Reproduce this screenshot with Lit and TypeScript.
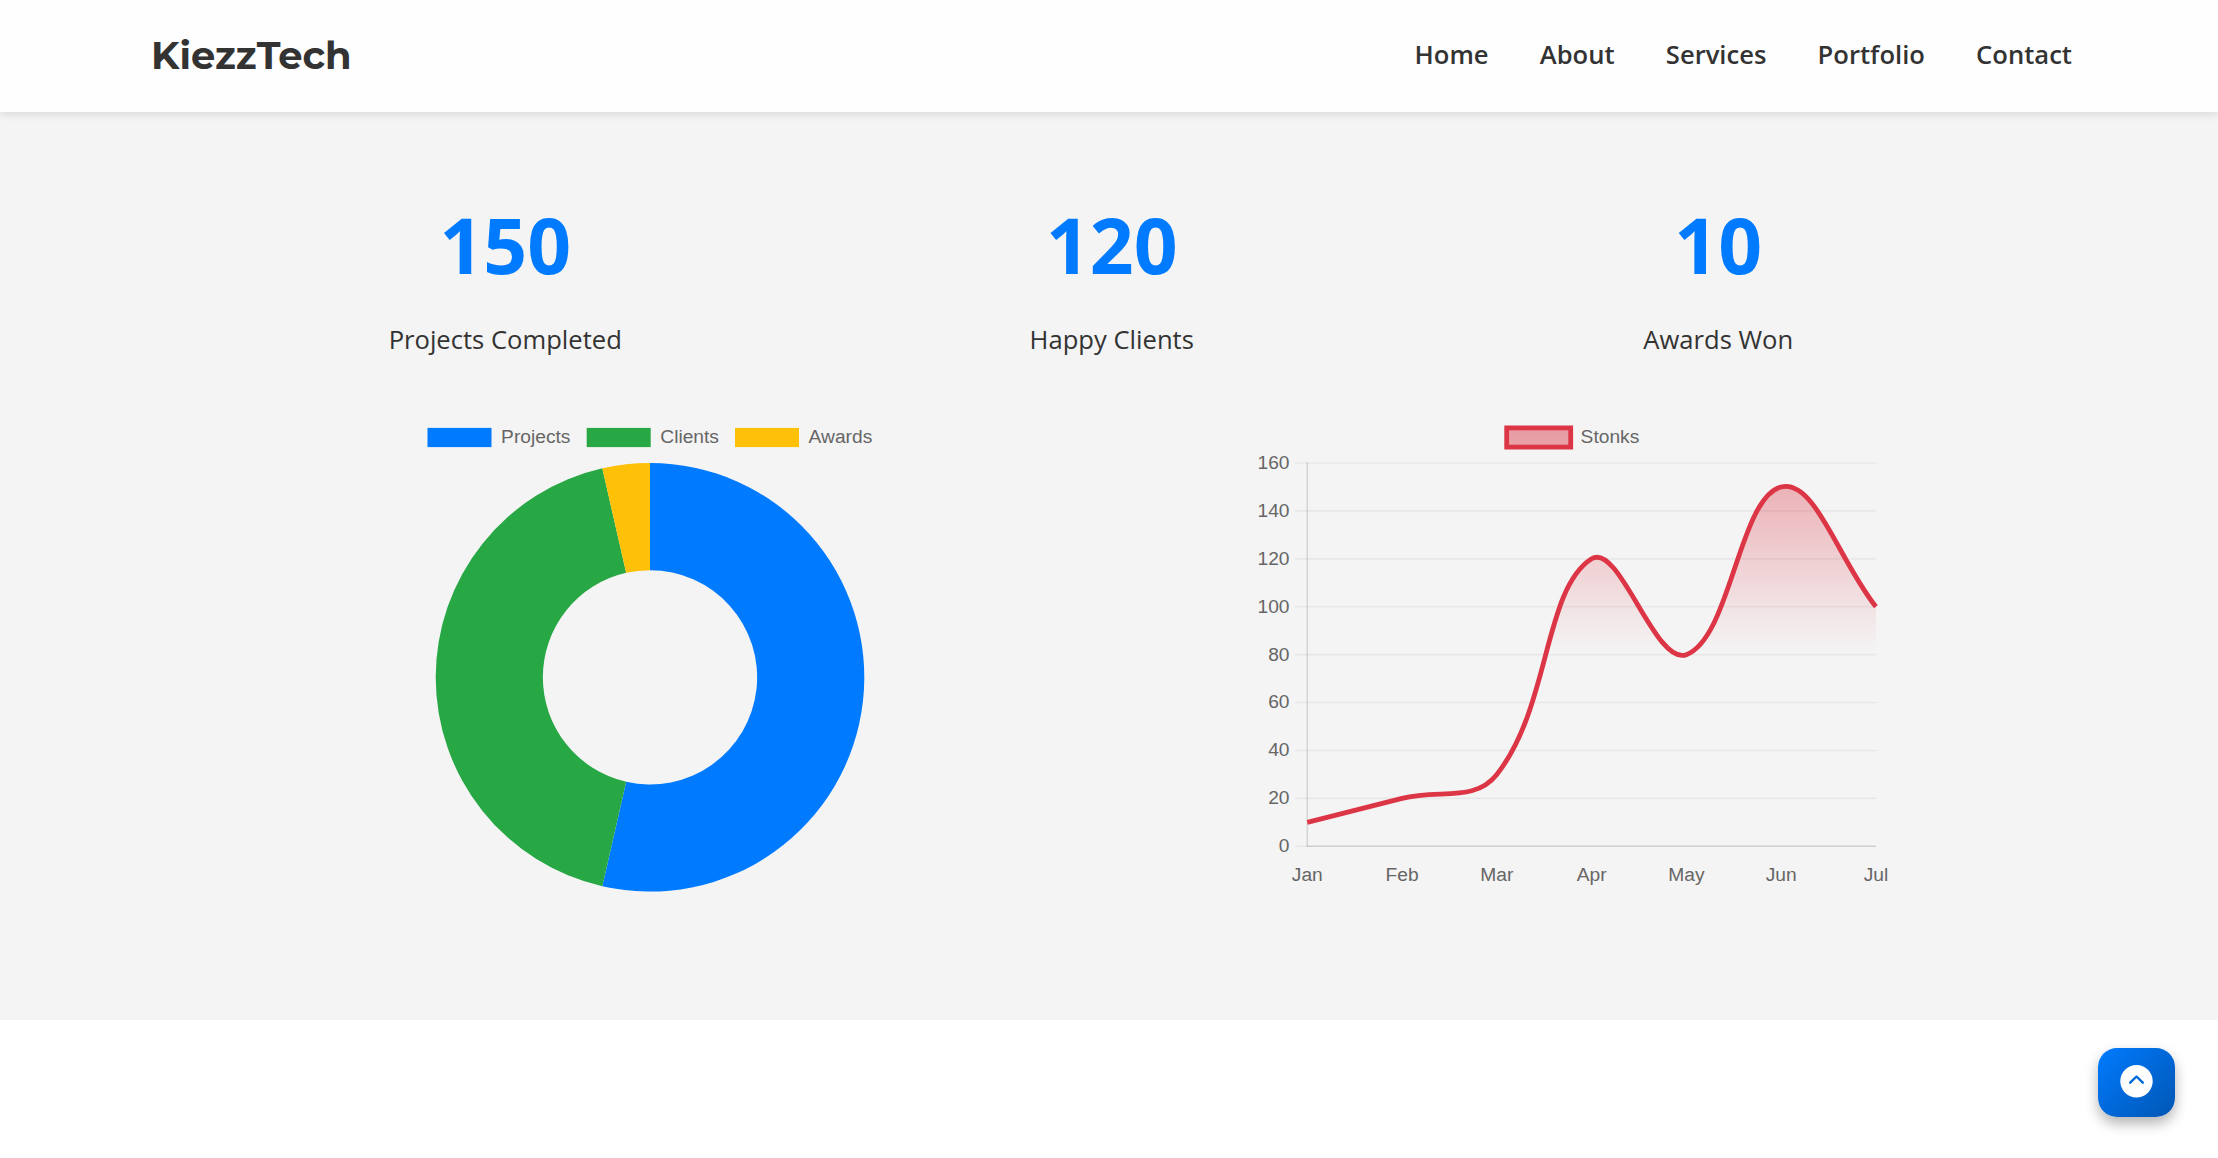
import { LitElement, html, svg, css } from "lit";
import { customElement, property } from "lit/decorators.js";

interface Slice { label: string; value: number; color: string; x: number; }

const SLICES: Slice[] = [
  { label: "Projects", value: 150, color: "#007bff", x: 97.5 },
  { label: "Clients", value: 120, color: "#28a745", x: 256.7 },
  { label: "Awards", value: 10, color: "#ffc107", x: 405 },
];

const chartStyles = css`
  :host { display: block; width: 640px; height: 482px; }
  svg { display: block; overflow: visible; }
  text { font-family: "Liberation Sans", Arial, sans-serif; font-size: 19.2px; fill: #666; }
`;

@customElement("donut-chart")
class DonutChart extends LitElement {
  static styles = chartStyles;

  private slicePath(from: number, to: number) {
    const cx = 320, cy = 267.3, R = 214.3, r = 107.15;
    const p = (a: number, rad: number) =>
      `${cx + rad * Math.sin(a)} ${cy - rad * Math.cos(a)}`;
    const large = to - from > Math.PI ? 1 : 0;
    return `M${p(from, R)}A${R} ${R} 0 ${large} 1 ${p(to, R)}L${p(to, r)}A${r} ${r} 0 ${large} 0 ${p(from, r)}Z`;
  }

  render() {
    const total = SLICES.reduce((s, d) => s + d.value, 0);
    let angle = 0;
    return html`<svg width="640" height="482" viewBox="0 0 640 482">
      ${SLICES.map((d) => {
        const start = angle;
        angle += (d.value / total) * Math.PI * 2;
        return svg`
          <rect x=${d.x} y="17.9" width="64" height="19.2" fill=${d.color}></rect>
          <text x=${d.x + 73.6} y="33">${d.label}</text>
          <path d=${this.slicePath(start, angle)} fill=${d.color}></path>`;
      })}
    </svg>`;
  }
}

@customElement("line-chart")
class LineChart extends LitElement {
  static styles = chartStyles;

  private readonly months = ["Jan", "Feb", "Mar", "Apr", "May", "Jun", "Jul"];
  private readonly values = [10, 20, 30, 120, 80, 150, 100];

  private x(i: number) { return 57.3 + (i * 568.6) / 6; }
  private y(v: number) { return 436.3 - (v / 160) * 383.3; }

  /* Cardinal spline with tension 0.4, weighted by neighbour distance. */
  private curve() {
    const t = 0.4;
    const pts = this.values.map((v, i) => ({ x: this.x(i), y: this.y(v) }));
    const ctl = pts.map((c, i) => {
      const a = pts[Math.max(0, i - 1)];
      const b = pts[Math.min(pts.length - 1, i + 1)];
      const d1 = Math.hypot(c.x - a.x, c.y - a.y);
      const d2 = Math.hypot(b.x - c.x, b.y - c.y);
      const f1 = (t * d1) / (d1 + d2), f2 = (t * d2) / (d1 + d2);
      return {
        px: c.x - f1 * (b.x - a.x), py: c.y - f1 * (b.y - a.y),
        nx: c.x + f2 * (b.x - a.x), ny: c.y + f2 * (b.y - a.y),
      };
    });
    let d = `M${pts[0].x} ${pts[0].y}`;
    for (let i = 1; i < pts.length; i++) {
      d += `C${ctl[i - 1].nx} ${ctl[i - 1].ny} ${ctl[i].px} ${ctl[i].py} ${pts[i].x} ${pts[i].y}`;
    }
    return d;
  }

  render() {
    const ticks = [0, 20, 40, 60, 80, 100, 120, 140, 160];
    const line = this.curve();
    return html`<svg width="640" height="482" viewBox="0 0 640 482">
      <defs>
        <linearGradient id="fade" gradientUnits="userSpaceOnUse" x1="0" y1="2" x2="0" y2="242">
          <stop offset="0" stop-color="#dc3545" stop-opacity="0.5"></stop>
          <stop offset="1" stop-color="#dc3545" stop-opacity="0"></stop>
        </linearGradient>
      </defs>
      <rect x="256.7" y="17.9" width="64" height="19.2" fill="url(#fade)" stroke="#dc3545" stroke-width="4.8"></rect>
      <text x="330.6" y="33">Stonks</text>
      ${ticks.map((v) => svg`
        <path d="M45 ${this.y(v)}H626" stroke="#000" stroke-opacity="0.05" stroke-width="1.6"></path>
        <text x="39.5" y=${this.y(v) + 5.9} text-anchor="end">${v}</text>`)}
      <path d="M57.3 52.5V437" stroke="#000" stroke-opacity="0.12" stroke-width="1.6"></path>
      <path d="M57.3 436.3H626" stroke="#000" stroke-opacity="0.1" stroke-width="1.6"></path>
      ${this.months.map((m, i) => svg`<text x=${this.x(i)} y="471" text-anchor="middle">${m}</text>`)}
      <path d="${line}V436.3H57.3Z" fill="url(#fade)"></path>
      <path d=${line} fill="none" stroke="#dc3545" stroke-width="4.8"></path>
    </svg>`;
  }
}

@customElement("stat-item")
class StatItem extends LitElement {
  @property() value = "";
  @property() label = "";
  static styles = css`
    :host { display: flex; flex-direction: column; align-items: center; }
    .value { font-size: 76.8px; font-weight: 700; line-height: 104px; color: #007bff; }
    .label { font-size: 25.6px; font-weight: 400; line-height: 41px; margin-top: 22px; color: #333; }
  `;
  render() {
    return html`<div class="value">${this.value}</div><div class="label">${this.label}</div>`;
  }
}

@customElement("app-root")
class AppRoot extends LitElement {
  static styles = css`
    :host {
      display: block; position: relative; height: 1158px; overflow: hidden;
      background: #fff; color: #333; font-family: "Open Sans", "Noto Sans", sans-serif;
    }
    .header {
      position: relative; z-index: 1; box-sizing: border-box; height: 112px;
      padding: 0 146px 0 151px; display: flex; align-items: center; justify-content: space-between;
      background: #fefefe; box-shadow: 0 3.2px 8px rgba(0, 0, 0, 0.1);
    }
    .logo { font-family: Montserrat, Inter, sans-serif; font-weight: 700; font-size: 38.4px; line-height: 48px; }
    .nav { display: flex; gap: 51.2px; padding-bottom: 4px; }
    .link { font-size: 25.6px; font-weight: 600; line-height: 41px; color: #333; text-decoration: none; }
    .stats {
      box-sizing: border-box; height: 908px; padding: 81px 202px 0; background: #f4f4f4;
    }
    .numbers { display: grid; grid-template-columns: repeat(3, 606.5px); }
    .charts { display: flex; gap: 280px; padding: 50px 0 0 128px; }
    .top {
      position: absolute; left: 2098px; top: 1048px; width: 77px; height: 69px; padding: 0; border: 0;
      border-radius: 19.2px; display: flex; justify-content: center; padding-top: 17px;
      background: linear-gradient(135deg, #007bff, #0056b3);
      box-shadow: 0 6.4px 12.8px rgba(0, 0, 0, 0.3);
    }
  `;
  render() {
    return html`
      <header class="header">
        <div class="logo">KiezzTech</div>
        <nav class="nav">
          ${["Home", "About", "Services", "Portfolio", "Contact"].map(
            (t) => html`<a class="link" href="#">${t}</a>`)}
        </nav>
      </header>
      <section class="stats">
        <div class="numbers">
          <stat-item value="150" label="Projects Completed"></stat-item>
          <stat-item value="120" label="Happy Clients"></stat-item>
          <stat-item value="10" label="Awards Won"></stat-item>
        </div>
        <div class="charts">
          <donut-chart></donut-chart>
          <line-chart></line-chart>
        </div>
      </section>
      <button class="top" aria-label="Back to top">
        <svg width="33" height="33" viewBox="0 0 33 33">
          <circle cx="16.5" cy="16.2" r="16.2" fill="#fff"></circle>
          <path d="M10.2 17.7L16.5 11.5L22.8 17.7" fill="none" stroke="#0069d9" stroke-width="2.4"
            stroke-linecap="round" stroke-linejoin="round"></path>
        </svg>
      </button>`;
  }
}
